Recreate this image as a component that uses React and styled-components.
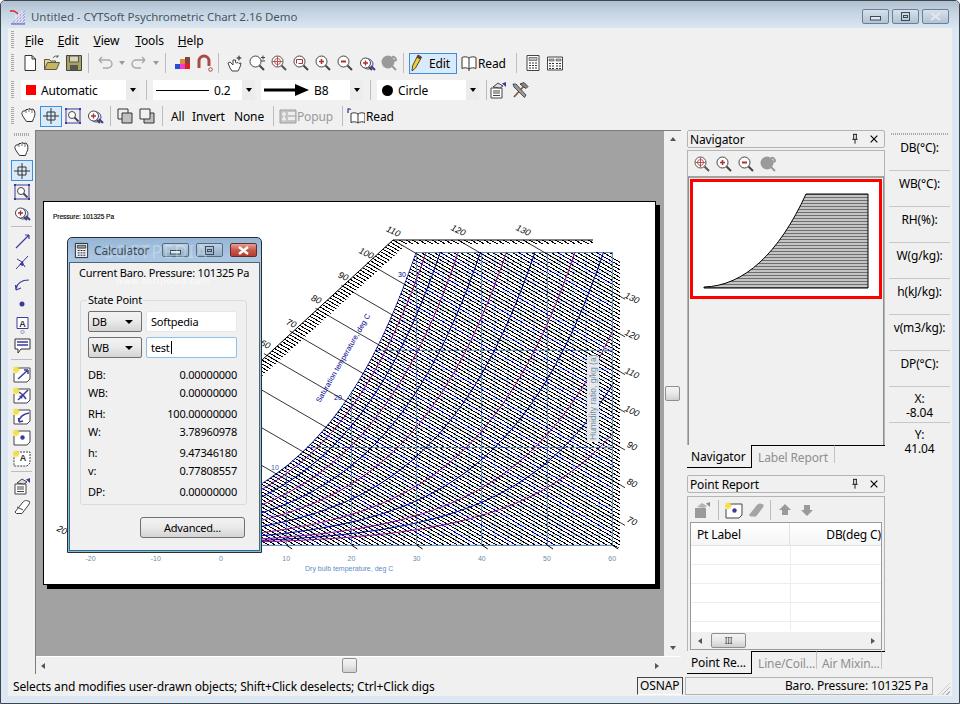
import React from 'react';
import styled, { createGlobalStyle } from 'styled-components';

const Global = createGlobalStyle`
  html, body { margin: 0; padding: 0; background: #fff; }
  body { font-family: "Noto Sans", "Liberation Sans", sans-serif; font-size: 12px; letter-spacing: -0.14px; color: #000; }
  * { box-sizing: border-box; }
`;

const Win = styled.div`
  width: 960px;
  height: 704px;
  display: flex;
  flex-direction: column;
  border: 1px solid #3f444b;
  border-radius: 5px 5px 0 0;
  background: #dbe7f3;
  overflow: hidden;
`;

const TitleBar = styled.div`
  height: 27px;
  display: flex;
  align-items: center;
  padding: 4px 10px 0 9px;
  background: linear-gradient(#aebfd0, #c4d3e1 40%, #dae7f3);
`;

const TitleText = styled.div`
  flex: 1;
  margin-left: 5px;
  color: #4a5560;
  font-size: 11.5px;
  letter-spacing: -0.05px;
`;

const CapBtn = styled.div`
  width: 27px;
  height: 15px;
  margin-left: 3px;
  display: flex;
  align-items: center;
  justify-content: center;
  border: 1px solid #6d7f92;
  border-radius: 2px;
  background: linear-gradient(#d6e1ec, #c4d2df 50%, #b3c3d3);
`;

const Client = styled.div`
  flex: 1;
  margin: 0 7px 7px;
  display: flex;
  flex-direction: column;
  background: #f0f0f0;
  min-height: 0;
`;

const Toolbars = styled.div`
  height: 102px;
  display: flex;
  flex-direction: column;
`;

const Bar = styled.div`
  height: ${p => p.$h || 22}px;
  margin-top: ${p => p.$mt || 0}px;
  display: flex;
  align-items: center;
  padding-left: 3px;
`;

const Grip = styled.div`
  width: 3px;
  height: ${p => p.$h || 18}px;
  margin-right: ${p => p.$mr ?? 5}px;
  background: repeating-linear-gradient(#a8a8a8 0 1px, transparent 1px 2px);
`;

const MenuItem = styled.div`
  margin-right: ${p => p.$mr}px;
  font-size: 12px;
  u { text-decoration: underline; }
`;

const Btn = styled.div`
  width: 22px;
  height: 21px;
  flex: none;
  display: flex;
  align-items: center;
  justify-content: center;
  border: 1px solid ${p => (p.$on ? '#3c8fe0' : 'transparent')};
  background: ${p => (p.$on ? '#d9ebfb' : 'transparent')};
`;

const DropBtn = styled.div`
  width: 12px;
  display: flex;
  justify-content: center;
  &::after {
    content: '';
    border: 3px solid transparent;
    border-top: 4px solid #9a9a9a;
    border-bottom: 0;
  }
`;

const Sep = styled.div`
  width: 1px;
  height: ${p => p.$h || 20}px;
  flex: none;
  margin: 0 ${p => p.$r ?? 5}px 0 ${p => p.$l ?? 3}px;
  background: #bdbdbd;
`;

const TextBtn = styled.div`
  width: ${p => p.$w}px;
  height: 21px;
  flex: none;
  display: flex;
  align-items: center;
  gap: ${p => p.$gap ?? 0}px;
  padding-left: ${p => p.$pl ?? 0}px;
  border: 1px solid ${p => (p.$on ? '#3c8fe0' : 'transparent')};
  background: ${p => (p.$on ? '#d9ebfb' : 'transparent')};
  color: ${p => (p.$off ? '#9a9a9a' : '#000')};
`;

const Combo = styled.div`
  width: ${p => p.$w}px;
  height: 20px;
  flex: none;
  margin-left: ${p => p.$ml ?? 0}px;
  display: flex;
  align-items: center;
  padding-left: ${p => p.$pl ?? 5}px;
  gap: 5px;
  background: #fff;
`;

const ComboArrow = styled.div`
  width: 13px;
  align-self: stretch;
  margin-left: auto;
  display: flex;
  align-items: center;
  justify-content: center;
  background: #ececec;
  &::after {
    content: '';
    border: 3px solid transparent;
    border-top: 4px solid #000;
    border-bottom: 0;
  }
`;

const Swatch = styled.div`
  width: 10px;
  height: 10px;
  background: #f00;
`;

const Dot = styled.div`
  width: 11px;
  height: 11px;
  border-radius: 50%;
  background: #000;
`;

const LineSample = styled.div`
  width: 53px;
  height: 1px;
  background: #000;
`;

const Main = styled.div`
  flex: 1;
  display: flex;
  min-height: 0;
`;

const Rail = styled.div`
  width: 27px;
  flex: none;
  display: flex;
  flex-direction: column;
  align-items: center;
  padding-top: 3px;
`;

const RailGrip = styled.div`
  width: 15px;
  height: 3px;
  margin-bottom: 3px;
  background: repeating-linear-gradient(90deg, #a8a8a8 0 1px, transparent 1px 2px);
`;

const RailSep = styled.div`
  width: 21px;
  height: 1px;
  margin: 3px 0;
  background: #bdbdbd;
`;

const Pane = styled.div`
  width: 646px;
  height: 544px;
  flex: none;
  display: flex;
  flex-direction: column;
  border-left: 1px solid #7c7c7c;
  border-top: 1px solid #7c7c7c;
`;

const PaneTop = styled.div`
  flex: 1;
  display: flex;
  min-height: 0;
`;

const Canvas = styled.div`
  position: relative;
  flex: 1;
  padding: 70px 0 0 7px;
  background: #a2a2a2;
  overflow: hidden;
`;

const Paper = styled.div`
  width: 613px;
  height: 384px;
  border: 1px solid #000;
  background: #fff;
  box-shadow: 4px 4px 0 #000;
  svg { display: block; }
`;

const VScroll = styled.div`
  width: 17px;
  flex: none;
  display: flex;
  flex-direction: column;
  align-items: center;
  padding: 6px 0;
  background: #f0f0f0;
`;

const HScroll = styled.div`
  height: 18px;
  flex: none;
  display: flex;
  align-items: center;
  padding: 0 ${p => p.$pr ?? 22}px 0 ${p => p.$pl ?? 5}px;
  border-top: 1px solid #fff;
  background: #f0f0f0;
`;

const Arrow = styled.div`
  flex: none;
  border: 3.5px solid transparent;
  ${p => p.$dir === 'up' && 'border-bottom: 4px solid #555; border-top: 0;'}
  ${p => p.$dir === 'down' && 'border-top: 4px solid #555; border-bottom: 0;'}
  ${p => p.$dir === 'left' && 'border-right: 4px solid #555; border-left: 0;'}
  ${p => p.$dir === 'right' && 'border-left: 4px solid #555; border-right: 0;'}
`;

const EndArrow = styled(Arrow)`
  margin-left: ${p => (p.$dir === 'right' ? 'auto' : '0')};
  margin-top: ${p => (p.$dir === 'down' ? 'auto' : '0')};
`;

const Thumb = styled.div`
  flex: none;
  width: ${p => p.$w || 15}px;
  height: 15px;
  margin: ${p => p.$mt || 0}px 0 0 ${p => p.$ml || 0}px;
  display: flex;
  align-items: center;
  justify-content: center;
  border: 1px solid #8e8f8f;
  border-radius: 2px;
  background: linear-gradient(#f4f4f4, #e8e8e8 50%, #d0d0d0);
  font-size: 8px;
  color: #444;
`;

const Dock = styled.div`
  width: 198px;
  flex: none;
  margin-left: 6px;
  display: flex;
  flex-direction: column;
`;

const DockHead = styled.div`
  height: 18px;
  flex: none;
  margin-top: ${p => p.$mt || 0}px;
  display: flex;
  align-items: center;
  padding: 0 4px 0 2px;
  border: 1px solid #b4b4b4;
  border-radius: 2px;
  font-size: 12px;
  gap: 7px;
  span { flex: 1; }
`;

const DockBody = styled.div`
  height: ${p => p.$h}px;
  flex: none;
  margin-top: ${p => p.$mt ?? 2}px;
  display: flex;
  flex-direction: column;
  border: 1px solid #b4b4b4;
  border-bottom: 0;
`;

const DockTools = styled.div`
  height: 25px;
  flex: none;
  display: flex;
  align-items: center;
  padding-left: 3px;
`;

const NavView = styled.div`
  flex: 1;
  border-top: 2px solid #a2a2a2;
  border-left: 1px solid #8f8f8f;
  border-right: 1px solid #8f8f8f;
  padding: 1px 1px 0;
  background: #f0f0f0;
`;

const NavFrame = styled.div`
  height: 120px;
  border: 3px solid #f00;
  background: #fff;
  svg { display: block; }
`;

const Tabs = styled.div`
  height: ${p => p.$h}px;
  flex: none;
  display: flex;
  align-items: flex-start;
`;

const Tab = styled.div`
  flex: none;
  width: ${p => p.$w}px;
  padding: 3px 0 0 ${p => p.$pl ?? 4}px;
  color: ${p => (p.$on ? '#000' : '#8f8f8f')};
  white-space: nowrap;
  border-right: 1px solid ${p => (p.$on ? '#000' : '#c4c4c4')};
  border-bottom: ${p => (p.$on ? '1px solid #000' : '0')};
  border-top: ${p => (p.$on ? '0' : '1px solid #000')};
  height: ${p => (p.$on ? '100%' : '18px')};
`;

const TabRest = styled.div`
  flex: 1;
  border-top: 1px solid #000;
`;

const Table = styled.div`
  height: 128px;
  margin: 0 2px;
  flex: none;
  display: flex;
  flex-direction: column;
  border: 1px solid #9a9a9a;
  background: #fff;
`;

const THead = styled.div`
  height: 23px;
  flex: none;
  display: grid;
  grid-template-columns: 99px 1fr;
  background: linear-gradient(#fff, #f4f5f6);
  border-bottom: 1px solid #e2e2e2;
`;

const Th = styled.div`
  padding: 3px 0 0 6px;
  text-align: ${p => (p.$right ? 'right' : 'left')};
  border-right: ${p => (p.$right ? '0' : '1px solid #e2e2e2')};
  overflow: hidden;
  white-space: nowrap;
`;

const TRow = styled.div`
  height: 19px;
  flex: none;
  display: grid;
  grid-template-columns: 100px 1fr;
  border-bottom: 1px solid #ededed;
  div:first-child { border-right: 1px solid #ededed; }
`;

const TableGap = styled.div`
  flex: 1;
  min-height: 0;
  overflow: hidden;
`;

const Info = styled.div`
  width: 61px;
  flex: none;
  margin-left: 4px;
  display: flex;
  flex-direction: column;
  align-items: stretch;
  padding-top: 3px;
`;

const InfoGrip = styled.div`
  height: 2px;
  margin: 0 2px;
  background: repeating-linear-gradient(90deg, #a8a8a8 0 1px, transparent 1px 2px);
`;

const InfoCell = styled.div`
  height: 36px;
  flex: none;
  padding-top: ${p => p.$pt ?? 6}px;
  border-bottom: 1px solid #c8c8c8;
  text-align: center;
  line-height: 14px;
  white-space: nowrap;
  &:last-child { border-bottom: 0; }
`;

const Status = styled.div`
  height: 20px;
  flex: none;
  display: flex;
  align-items: center;
  padding-left: 5px;
`;

const StatusText = styled.div`
  flex: 1;
  white-space: nowrap;
`;

const StatusBox = styled.div`
  height: 18px;
  width: ${p => p.$w}px;
  flex: none;
  margin-right: ${p => p.$mr}px;
  padding: 0 4px 0 2px;
  text-align: ${p => (p.$right ? 'right' : 'left')};
  line-height: 16px;
  border: 1px solid ${p => (p.$dark ? '#444' : '#b4b4b4')};
  border-bottom-color: ${p => (p.$dark ? '#fff' : '#b4b4b4')};
  white-space: nowrap;
`;

const SizeGrip = styled.div`
  width: 12px;
  height: 12px;
  margin: 6px 2px 0 2px;
  background: repeating-linear-gradient(135deg, transparent 0 2px, #b4b4b4 2px 3px);
  clip-path: polygon(100% 0, 100% 100%, 0 100%);
`;

const Dialog = styled.div`
  position: absolute;
  left: 31px;
  top: 106px;
  width: 195px;
  height: 316px;
  display: flex;
  flex-direction: column;
  border: 1px solid #2a2f36;
  border-radius: 5px 5px 0 0;
  background: linear-gradient(#95b6d6, #a9c6e2 18px, #6fc4ec);
  font-size: 11px;
  letter-spacing: -0.2px;
`;

const DialogTitle = styled.div`
  position: relative;
  height: 24px;
  flex: none;
  display: flex;
  align-items: center;
  padding: 0 4px 0 5px;
  gap: 4px;
  color: #3f4650;
`;

const DialogName = styled.div`
  flex: 1;
  font-size: 12px;
`;

const DlgCap = styled.div`
  width: 27px;
  height: 14px;
  margin-left: ${p => p.$ml ?? 3}px;
  display: flex;
  align-items: center;
  justify-content: center;
  border: 1px solid ${p => (p.$close ? '#6a2a24' : '#5b6b7c')};
  border-radius: 2px;
  background: ${p => (p.$close
    ? 'linear-gradient(#e2a196, #c9584a 50%, #b83c2e)'
    : 'linear-gradient(#bfd2e6, #a6bed6 50%, #96b0ca)')};
`;

const Watermark = styled.div`
  position: absolute;
  left: 36px;
  top: 1px;
  color: rgba(255, 255, 255, 0.28);
  font-size: 18px;
  letter-spacing: 1px;
  pointer-events: none;
`;

const DialogBody = styled.div`
  position: relative;
  flex: 1;
  margin: 0 1px 1px;
  padding: 2px 10px 0 9px;
  border: 1px solid #51626f;
  background: #f0f0f0;
`;

const WatermarkSmall = styled.div`
  position: absolute;
  left: 46px;
  top: 11px;
  color: rgba(255, 255, 255, 0.75);
  font-size: 9px;
  letter-spacing: 0.6px;
  pointer-events: none;
`;

const BaroLine = styled.div`
  white-space: nowrap;
  line-height: 16px;
`;

const Group = styled.fieldset`
  height: 212px;
  margin: 12px 4px 0 1px;
  padding: 0 9px 0 7px;
  border: 1px solid #d3dce4;
  border-radius: 3px;
  legend {
    padding: 0 1px;
    margin-left: -1px;
    font-size: 11px;
    line-height: 14px;
  }
`;

const FieldRow = styled.div`
  display: flex;
  gap: 4px;
  margin-top: ${p => p.$mt}px;
`;

const Select = styled.div`
  width: 54px;
  height: 21px;
  flex: none;
  display: flex;
  align-items: center;
  justify-content: space-between;
  padding: 0 8px 0 3px;
  border: 1px solid #707070;
  border-radius: 2px;
  background: linear-gradient(#f2f2f2, #ebebeb 45%, #d4d4d4);
  &::after {
    content: '';
    border: 4px solid transparent;
    border-top: 4px solid #000;
    border-bottom: 0;
  }
`;

const Field = styled.div`
  width: 91px;
  height: 21px;
  display: flex;
  align-items: center;
  padding-left: 4px;
  background: #fff;
  border: 1px solid ${p => (p.$focus ? '#8fc0e8' : '#e4e9ef')};
  border-radius: 2px;
`;

const Caret = styled.span`
  width: 1px;
  height: 13px;
  margin-left: 1px;
  background: #000;
`;

const Readouts = styled.div`
  margin-top: 8px;
`;

const Readout = styled.div`
  height: 18px;
  margin-top: ${p => p.$mt || 0}px;
  display: flex;
  justify-content: space-between;
  line-height: 18px;
`;

const Advanced = styled.div`
  width: 105px;
  height: 21px;
  margin: 12px 0 0 61px;
  text-align: center;
  line-height: 19px;
  border: 1px solid #707070;
  border-radius: 3px;
  background: linear-gradient(#f2f2f2, #ebebeb 45%, #d4d4d4);
`;

const Ico = styled.svg`
  flex: none;
  width: ${p => p.$s || 18}px;
  height: ${p => p.$s || 18}px;
`;

const ChartLabel = styled.text`
  font-family: "Liberation Sans", sans-serif;
  font-size: ${p => p.$fs || 7}px;
  letter-spacing: 0;
  fill: ${p => p.$c || '#6c8cab'};
`;

const ChartItalic = styled(ChartLabel)`
  font-style: italic;
  fill: #000;
  font-size: 9px;
`;

const ic = { fill: 'none', stroke: '#333', strokeWidth: 1 };
const idg = '#3b3b9b';

const Lens = ({ children, c = '#444' }) => (
  <g>
    <circle cx="7.5" cy="7.5" r="5.5" fill="#fff" stroke={c} strokeWidth="1" />
    <path d="M11.5 11.5 L16 16" stroke={c} strokeWidth="2" />
    {children}
  </g>
);

const redPlus = <path d="M5 7.5h5M7.5 5v5" stroke="#a33" strokeWidth="1.6" />;
const redMinus = <path d="M5 7.5h5" stroke="#a33" strokeWidth="1.8" />;

const corners = (
  <path d="M1 1h2v2h-2zM15 1h2v2h-2zM1 15h2v2h-2zM15 15h2v2h-2z" fill={idg} />
);

const spark = <path d="M3 0.5l1 2.2 2.2-1-1 2.2 2.2 1-2.2 1 1 2.2-2.2-1-1 2.2-1-2.2-2.2 1 1-2.2-2.2-1 2.2-1-1-2.2 2.2 1z" fill="#f4e04a" />;

const dogEar = (
  <path d="M4 3h13v11l-3 3H1v-9" fill="#fff" stroke="#444" />
);

const glyphs = {
  new: <path d="M4 1.5h7l3.5 3.5v11.5H4zM11 1.5v3.5h3.5" fill="#fff" stroke="#333" />,
  open: (
    <g>
      <path d="M1.5 15.5v-10h5l1 1.5h5v2" fill="#e8d98a" stroke="#555" />
      <path d="M1.5 15.5l3-7h12l-3 7z" fill="#c9b55a" stroke="#555" />
      <path d="M10 4c1-2 3-2.500 5-1.500M15 1v2h-2" {...ic} stroke="#4a7a3a" />
    </g>
  ),
  save: (
    <g>
      <path d="M1.500 1.500h15v15h-15z" fill="#a8a25a" stroke="#444" />
      <path d="M4.500 2h9v6h-9z" fill="#d8d6b4" stroke="#555" />
      <path d="M5 11h8v5.500H5z" fill="#555" />
    </g>
  ),
  undo: <path d="M3 6h9a3.500 3.500 0 0 1 0 8H7M3 6l3-3M3 6l3 3" fill="none" stroke="#a8a8a8" strokeWidth="1.400" />,
  redo: <path d="M15 6H6a3.500 3.500 0 0 0 0 8h5M15 6l-3-3M15 6l-3 3" fill="none" stroke="#a8a8a8" strokeWidth="1.400" />,
  palette: (
    <g>
      <path d="M2 10h5v5H2z" fill="#2b4bd8" />
      <path d="M7 10h5v5H7z" fill="#ee3ad0" />
      <path d="M12 10h5v5h-5z" fill="#e02020" />
      <path d="M7 5h5v5H7z" fill="#d98a3a" />
      <path d="M12 3h5v7h-5z" fill="#8a4040" />
    </g>
  ),
  magnet: (
    <g>
      <path d="M4 14V7a5 5 0 0 1 10 0v5" fill="none" stroke="#a84a4a" strokeWidth="3" />
      <circle cx="15.500" cy="15.500" r="1.800" {...ic} stroke="#a84a4a" />
    </g>
  ),
  pick: (
    <g>
      <path d="M2 9l2 5 2 3h6l2-4 1-4-2 .5-1-1-1.500.5-1-.5V6L7 6v5L4 8z" fill="#fff" stroke="#444" />
      <path d="M13 1l1 2 2 1-2 1-1 2-1-2-2-1 2-1z" fill="#556" />
    </g>
  ),
  zoompm: (
    <Lens>
      <path d="M13 3.500h4M15 1.500v4M13 7h4" stroke="#444" />
    </Lens>
  ),
  ztarget: (
    <Lens c="#555">
      <circle cx="7.500" cy="7.500" r="3" fill="none" stroke="#a33" strokeWidth=".8" />
      <path d="M2.500 7.500h10M7.500 2.500v10" stroke="#a33" strokeWidth=".8" />
    </Lens>
  ),
  zrect: (
    <Lens>
      <path d="M4.500 9.500v-4h6" fill="none" stroke="#a33" />
      <path d="M10.500 5.500v4h-4" fill="none" stroke="#a33" />
    </Lens>
  ),
  zplus: <Lens>{redPlus}</Lens>,
  zminus: <Lens>{redMinus}</Lens>,
  zglass: (
    <g>
      <path d="M10 5a5 5 0 1 1-.1 0" fill="none" stroke={idg} />
      <path d="M13 12l4 4" stroke={idg} strokeWidth="2" />
      <circle cx="7.500" cy="9" r="5" fill="#fff" stroke="#444" />
      <path d="M11 13l3 3" stroke="#444" strokeWidth="2" />
      <path d="M5 9h5M7.500 6.500v5" stroke="#a33" strokeWidth="1.400" />
    </g>
  ),
  zgrey: (
    <g>
      <circle cx="8" cy="8" r="6.500" fill="#9a9a9a" />
      <path d="M12 3a3 3 0 0 1 4 3l-2 1M12 12l4 4" fill="none" stroke="#9a9a9a" strokeWidth="2" />
    </g>
  ),
  pencil: (
    <g>
      <path d="M6 3l3.500 2-5 9-3.500 3 .5-5z" fill="#f4d22a" stroke="#444" />
      <path d="M6 3l1-2 3.500 2-1 2z" fill="#8a3030" stroke="#444" />
    </g>
  ),
  book: <path d="M9 4c-2-1.500-5-1.500-7-.5v11c2-1 5-1 7 .5 2-1.500 5-1.500 7-.5v-11c-2-1-5-1-7 .5zM9 4v11M9 15v2" fill="#fff" stroke="#333" />,
  bookup: (
    <g>
      <path d="M9 7c-2-1.500-5-1.500-7-.5v9c2-1 5-1 7 .5 2-1.500 5-1.500 7-.5v-9c-2-1-5-1-7 .5zM9 7v9" fill="#fff" stroke="#333" transform="translate(2 0)" />
      <path d="M1 6V1.500M1 1.500l3 1M1 1.500l-0 3" stroke={idg} strokeWidth="1.300" fill="none" />
    </g>
  ),
  calc: (
    <g>
      <path d="M3 1.500h12v15H3z" fill="#fff" stroke="#444" />
      <path d="M5 3.500h8v3H5z" fill="#bbb" stroke="#444" strokeWidth=".6" />
      <path d="M5 9h2M8 9h2M11 9h2M5 11.500h2M8 11.500h2M11 11.500h2M5 14h2M8 14h2M11 14h2" stroke="#333" />
    </g>
  ),
  calcw: (
    <g>
      <path d="M1.500 3h15v13h-15z" fill="#fff" stroke="#444" />
      <path d="M3 5h5v2H3zM10 5h5v2h-5z" fill="#bbb" stroke="#444" strokeWidth=".6" />
      <path d="M3 9.500h2M6 9.500h2M10 9.500h2M13 9.500h2M3 12h2M6 12h2M10 12h2M13 12h2M3 14.500h2M6 14.500h2M10 14.500h2M13 14.500h2" stroke="#333" />
    </g>
  ),
  report: (
    <g>
      <path d="M2 7h11v10H2z" fill="#fff" stroke="#444" />
      <path d="M4 10h7M4 12h7M4 14.500h7" stroke="#444" />
      <path d="M4 6l5-4 5 3-3 2z" fill="#ddd" stroke="#444" />
      <path d="M13 2.500l4-1.500v5z" fill={idg} />
    </g>
  ),
  tools: (
    <g>
      <path d="M3 16L13 5" stroke="#8a5a30" strokeWidth="1.800" />
      <path d="M9 3l4-1.500 4 4-2 2-3-2z" fill="#888" stroke="#444" />
      <path d="M2 3l3 0 10 11-1.500 2.500L3 6z" fill="#999" stroke="#333" strokeWidth=".8" />
    </g>
  ),
  hand: (
    <g>
      <path d="M4 11C2 8 1 6 3 4l2 0 1-1.500h2l1-1 2 1 2-.5 1.500 2c1 3 0 6-1 7.500l-1 3H6.500z" fill="#fff" stroke="#333" />
      <path d="M6 3v3M9 2v3M12 3v3" stroke="#333" strokeWidth=".7" />
    </g>
  ),
  cross: (
    <g>
      <path d="M1 9h16M9 1v16" stroke="#333" />
      <path d="M5 5h8v8H5z" fill="none" stroke="#333" />
    </g>
  ),
  zsel: (
    <g>
      <path d="M2 2h14v14H2z" fill="none" stroke={idg} />
      {corners}
      <circle cx="8" cy="8" r="3.500" fill="#fff" stroke="#444" />
      <path d="M10.500 10.500l4 4" stroke="#444" strokeWidth="1.800" />
    </g>
  ),
  copya: (
    <g>
      <path d="M2 2h10v10H2z" fill="#f0f0f0" stroke="#333" />
      <path d="M6 6h10v10H6z" fill="#c0c0c0" stroke="#333" />
    </g>
  ),
  copyb: (
    <g>
      <path d="M6 6h10v10H6z" fill="#c0c0c0" stroke="#333" />
      <path d="M2 2h10v10H2z" fill="#f0f0f0" stroke="#333" />
    </g>
  ),
  popup: (
    <g>
      <path d="M1 3h16v13H1z" fill="#c4c4c4" stroke="#a0a0a0" />
      <path d="M9 5h7v3H9zM9 10h7v3H9z" fill="#eee" />
      <path d="M5 5v9M3 7h4M3 12h4" stroke="#eee" strokeWidth="1.500" />
    </g>
  ),
  arrowline: <path d="M3 16L16 3M16 3h-4M16 3v4" fill="none" stroke={idg} strokeWidth="1.200" />,
  hinge: <path d="M3 16l12-13M9 9l-5-3M9 9l3 5M9.500 8.500l-2.500 3 3 1z" fill={idg} stroke={idg} strokeWidth="1" />,
  curve: <path d="M3 15c1-6 6-9 13-9M3 16l-.5-5M3 16l5-2" fill="none" stroke={idg} strokeWidth="1.200" />,
  point: <circle cx="9" cy="9" r="2.500" fill={idg} />,
  textbox: (
    <g>
      <path d="M4 1.500h11v11H4z" fill="#fff" stroke={idg} />
      <text x="9.500" y="10.500" textAnchor="middle" fontSize="9" fontFamily="Liberation Sans" fontWeight="bold" fill="#333">A</text>
      <path d="M9.500 14l2 2-2 2-2-2z" fill="none" stroke="#777" strokeWidth=".8" />
    </g>
  ),
  note: (
    <g>
      <path d="M2 2h15v10H8l-3 4v-4H2z" fill="#fff" stroke="#333" />
      <path d="M4 5h11M4 8h11" stroke={idg} strokeWidth="1.500" />
    </g>
  ),
  narrow: (
    <g>
      {dogEar}
      <path d="M5 14L15 5M15 5h-4M15 5v4" fill="none" stroke={idg} strokeWidth="1.500" />
      {spark}
    </g>
  ),
  nhinge: (
    <g>
      {dogEar}
      <path d="M5 14l10-10M10 9l-4-3M10 9l3 4" fill="none" stroke={idg} strokeWidth="1.500" />
      <path d="M10 9l-4 1 3 3z" fill={idg} />
      {spark}
    </g>
  ),
  ncurve: (
    <g>
      {dogEar}
      <path d="M6 14c1-5 5-7 10-8M6 15l-.5-4M6 15l4-1" fill="none" stroke={idg} strokeWidth="1.500" />
      {spark}
    </g>
  ),
  npoint: (
    <g>
      {dogEar}
      <circle cx="9.500" cy="9.500" r="2.200" fill={idg} />
      {spark}
    </g>
  ),
  ntext: (
    <g>
      <path d="M4 3h13v11l-3 3H1v-9" fill="#fff" stroke="#444" strokeDasharray="2 1" />
      <text x="10" y="12" textAnchor="middle" fontSize="9" fontFamily="Liberation Sans" fontWeight="bold" fill="#333">A</text>
      {spark}
    </g>
  ),
  eraser: <path d="M2 14L10 4c1-1 2-1.500 3.500-1.500l3 1c.5 1 0 2-1 3.500L9 15.500H3.500zM4 9l6 3" fill="#fff" stroke="#444" />,
  greyreport: (
    <g>
      <path d="M2 7h11v10H2z" fill="#9a9a9a" />
      <path d="M4 6l5-4 5 3-3 2z" fill="#b4b4b4" />
      <path d="M13 2.500l4-1.500v5z" fill="#8a8a8a" />
    </g>
  ),
  greyeraser: <path d="M2 14L10 4c1-1 2-1.500 3.500-1.500l3 1c.5 1 0 2-1 3.500L9 15.500H3.500z" fill="#a4a4a4" />,
  up: <path d="M9 3l6 6h-3v5H6V9H3z" fill="#9a9a9a" />,
  down: <path d="M9 15l6-6h-3V4H6v5H3z" fill="#9a9a9a" />,
  calcTitle: (
    <g>
      <path d="M2.500 1.500h13v15h-13z" fill="#e8eef4" stroke="#222" />
      <path d="M4.500 3.500h9v3h-9z" fill="#999" stroke="#222" strokeWidth=".7" />
      <path d="M5 9h2M8 9h2M11 9h2M5 11.500h2M8 11.500h2M11 11.500h2M5 14h2M8 14h2M11 14h2" stroke="#222" />
    </g>
  ),
  pin: <path d="M6 2h6M7 2v7M11 2v7M5 9.500h8M9 9.500V16" fill="none" stroke="#000" strokeWidth="1.300" />,
  close: <path d="M4 4l10 10M14 4L4 14" fill="none" stroke="#000" strokeWidth="1.700" />,
};

const Icon = ({ name, s }) => (
  <Ico $s={s} viewBox="0 0 18 18">
    {glyphs[name]}
  </Ico>
);

const AppLogo = () => (
  <Ico $s={16} viewBox="0 0 16 16">
    <path d="M1 15L15 1v14z" fill="#a8a8e0" />
    <path d="M3 15L15 3M6 15L15 6M9 15l6-6M12 15l3-3M6 6v9M9 4v11M12 2v13" stroke="#fff" strokeWidth=".7" />
    <path d="M0 2h4l3 2 1 1" fill="none" stroke="#e02020" strokeWidth="1.300" />
    <path d="M1 15h14" stroke="#55a" />
  </Ico>
);

const CapGlyph = ({ kind, c = '#3d4a58' }) => (
  <svg width="13" height="9" viewBox="0 0 13 9">
    {kind === 'min' && <rect x="1.500" y="4.500" width="10" height="3.500" fill="#dfe8f0" stroke={c} />}
    {kind === 'max' && (
      <g fill="none" stroke={c}>
        <rect x="2.500" y="0.500" width="8" height="8" />
        <rect x="4.500" y="3.500" width="4" height="2" />
      </g>
    )}
    {kind === 'x' && (
      <path d="M2 1l9 7M11 1L2 8" fill="none" stroke={c} strokeWidth="2.200" />
    )}
    {kind === 'xw' && (
      <path d="M2 1l9 7M11 1L2 8" fill="none" stroke="#fff" strokeWidth="2.400" />
    )}
  </svg>
);

// chart geometry, in page coordinates
const axisX = t => 221 + 6.52 * t;
const axisY = w => 545 - 9.75 * w;
const satH = x => 62 * Math.exp(0.0101 * (x - 262));

const curveD = k => {
  let d = '';
  for (let x = 180; x <= 612; x += 6) {
    d += `${d ? 'L' : 'M'}${x} ${(545 - k * satH(x)).toFixed(1)}`;
  }
  return d;
};

const enthY = (x, n) => 240 + 0.58 * (x - (393 + 6.5 * (n - 110)));

const satPoints = (() => {
  const pts = ['180,545'];
  for (let x = 180; x <= 416; x += 6) pts.push(`${x},${(545 - satH(x)).toFixed(1)}`);
  pts.push('416,252', '612,252', '612,545');
  return pts.join(' ');
})();

const hatch = { black: '', navy: '', main: '' };
for (let n = -30; n <= 140; n += 1) {
  const d = `M44 ${enthY(44, n).toFixed(1)}L625 ${enthY(625, n).toFixed(1)}`;
  hatch.black += d;
  if (n % 6 === 0) hatch.navy += d;
}
for (let n = 20; n <= 130; n += 10) {
  const x0 = 393 + 6.5 * (n - 110);
  const sx = n >= 110 ? x0 : (0.88 * 393 + 0.58 * x0) / 1.46;
  const end = Math.min(625, x0 + (545 - 240) / 0.58);
  hatch.main += `M${sx.toFixed(1)} ${enthY(sx, n).toFixed(1)}L${end.toFixed(1)} ${enthY(end, n).toFixed(1)}`;
}

const lightGrid = (() => {
  let d = '';
  for (let t = -6; t <= 60; t += 2) d += `M${axisX(t).toFixed(1)} 252V545`;
  for (let w = 0; w <= 30; w += 1) d += `M180 ${axisY(w).toFixed(1)}H612`;
  return d;
})();

const steelGrid = (() => {
  let d = 'M180 350H612M180 447H612';
  for (let t = 0; t <= 50; t += 10) d += `M${axisX(t).toFixed(1)} 252V545`;
  return d;
})();

const rhCurves = [0.9, 0.65, 0.4, 0.2, 0.1, 0.052];
const blueCurves = [0.78, 0.52, 0.3, 0.15, 0.075];

const rightLabels = [
  ['130', 298], ['120', 335], ['110', 373], ['100', 411], ['90', 446], ['80', 483], ['70', 521],
];
const slantLabels = [
  ['110', 392, 234], ['120', 457, 233], ['130', 522, 233],
  ['100', 365, 256], ['90', 342, 279], ['80', 315, 302], ['70', 290, 326], ['60', 264, 347],
];
const tickLabels = [-20, -10, 0, 10, 20, 30, 40, 50, 60];

const Chart = () => (
  <svg width="611" height="382" viewBox="44 202 611 382">
    <defs>
      <clipPath id="plotClip">
        <polygon points={satPoints} />
      </clipPath>
      <clipPath id="hatchClip">
        <polygon points={satPoints} />
        <polygon points="393,240 593,240 593,244 393,244" />
        <polygon points="393,240 250,371 260,378 404,247" />
        <polygon points="612,254 620,262 620,548 612,546" />
      </clipPath>
    </defs>

    <ChartLabel x="53" y="219" $fs={6.500} $c="#000" stroke="#000" strokeWidth=".15">Pressure: 101325 Pa</ChartLabel>

    <path d={lightGrid} clipPath="url(#plotClip)" stroke="#c8dffa" strokeWidth="1.600" fill="none" />
    <path d={hatch.black} clipPath="url(#hatchClip)" stroke="#000" strokeWidth="1" fill="none" shapeRendering="crispEdges" />
    <path d={steelGrid} clipPath="url(#plotClip)" stroke="#6d8ead" strokeWidth="1" fill="none" shapeRendering="crispEdges" />
    <path d="M416 252H612V545H180" stroke="#6d8ead" fill="none" shapeRendering="crispEdges" />
    <path d={hatch.navy} clipPath="url(#plotClip)" stroke="#000080" strokeWidth="1" fill="none" shapeRendering="crispEdges" />
    <path d={hatch.main} stroke="#000" strokeWidth=".8" fill="none" />
    <path d="M593 240H393L250 371" stroke="#000" strokeWidth="1" fill="none" />

    {blueCurves.map(k => (
      <path key={k} d={curveD(k)} clipPath="url(#plotClip)" stroke="#00008b" strokeWidth="1" fill="none" />
    ))}
    {rhCurves.map(k => (
      <path key={k} d={curveD(k)} clipPath="url(#plotClip)" stroke="#90108a" strokeWidth="1" fill="none" />
    ))}
    <path d={curveD(1)} clipPath="url(#plotClip)" stroke="#000080" strokeWidth="1.400" fill="none" />

    {[0, 10, 20, 30, 40, 50, 60].map(t => (
      <path key={t} d={`M${axisX(t)} 545l6 4`} stroke="#000" />
    ))}

    {tickLabels.map(t => (
      <ChartLabel key={t} x={axisX(t)} y="561" textAnchor="middle">{t}</ChartLabel>
    ))}
    <ChartLabel x="305" y="571" $c="#5c8cc4">Dry bulb temperature, deg C</ChartLabel>
    <ChartLabel x="607" y="352" textAnchor="middle" $c="#b4c2cf">20</ChartLabel>
    <ChartLabel x="607" y="450" textAnchor="middle" $c="#9fb2c4">10</ChartLabel>
    <ChartLabel x="275" y="470" textAnchor="middle" $c="#3f5f9f">10</ChartLabel>
    <ChartLabel x="338" y="400" textAnchor="middle" $c="#000090">20</ChartLabel>
    <ChartLabel x="402" y="277" textAnchor="middle" $c="#000090">30</ChartLabel>

    <ChartLabel x="320" y="403" $fs={7.500} $c="#000090" transform="rotate(-60 320 403)">Saturation temperature, deg C</ChartLabel>

    <rect x="587" y="356" width="12" height="86" fill="#e8e8e8" />
    <ChartLabel x="596" y="440" $fs={8.500} $c="#6d8ead" transform="rotate(-90 596 440)">Humidity ratio, g/kg (a)</ChartLabel>

    {slantLabels.map(([t, x, y]) => (
      <ChartItalic key={t} x={x} y={y} textAnchor="middle" transform={`rotate(25 ${x} ${y})`}>{t}</ChartItalic>
    ))}
    {rightLabels.map(([t, y]) => (
      <ChartItalic key={t} x="632" y={y + 3} textAnchor="middle" transform={`rotate(25 632 ${y})`}>{t}</ChartItalic>
    ))}
    <ChartItalic x="62" y="533" textAnchor="middle" transform="rotate(25 62 530)">20</ChartItalic>
  </svg>
);

const navHatch = (() => {
  let d = '';
  for (let y = 12; y < 107; y += 3) d += `M0 ${y}H186`;
  return d;
})();

const NavThumb = () => (
  <svg width="186" height="114" viewBox="0 0 186 114">
    <defs>
      <clipPath id="navClip">
        <path d="M11 105C51 104 86 71 113 12H175V106H11z" />
      </clipPath>
    </defs>
    <path d="M11 105C51 104 86 71 113 12H175V106H11z" fill="#c4c4c4" />
    <path d={navHatch} clipPath="url(#navClip)" stroke="#6e6e6e" strokeWidth="1" shapeRendering="crispEdges" />
    <path d="M11 105C51 104 86 71 113 12H175V106H11z" fill="none" stroke="#000" strokeWidth="1" />
  </svg>
);

const App = () => (
  <>
    <Global />
    <Win>
      <TitleBar>
        <AppLogo />
        <TitleText>Untitled - CYTSoft Psychrometric Chart 2.16 Demo</TitleText>
        <CapBtn><CapGlyph kind="min" /></CapBtn>
        <CapBtn><CapGlyph kind="max" /></CapBtn>
        <CapBtn><CapGlyph kind="x" c="#dfe8f0" /></CapBtn>
      </TitleBar>
      <Client>
        <Toolbars>
          <Bar $h={24}>
            <Grip $mr={11} />
            <MenuItem $mr={14}><u>F</u>ile</MenuItem>
            <MenuItem $mr={15}><u>E</u>dit</MenuItem>
            <MenuItem $mr={16}><u>V</u>iew</MenuItem>
            <MenuItem $mr={14}><u>T</u>ools</MenuItem>
            <MenuItem $mr={0}><u>H</u>elp</MenuItem>
          </Bar>
          <Bar>
            <Grip />
            <Btn><Icon name="new" /></Btn>
            <Btn><Icon name="open" /></Btn>
            <Btn><Icon name="save" /></Btn>
            <Sep />
            <Btn><Icon name="undo" /></Btn>
            <DropBtn />
            <Btn><Icon name="redo" /></Btn>
            <DropBtn />
            <Sep />
            <Btn><Icon name="palette" /></Btn>
            <Btn><Icon name="magnet" /></Btn>
            <Sep />
            <Btn><Icon name="pick" /></Btn>
            <Btn><Icon name="zoompm" /></Btn>
            <Btn><Icon name="ztarget" /></Btn>
            <Btn><Icon name="zrect" /></Btn>
            <Btn><Icon name="zplus" /></Btn>
            <Btn><Icon name="zminus" /></Btn>
            <Btn><Icon name="zglass" /></Btn>
            <Btn><Icon name="zgrey" /></Btn>
            <Sep />
            <TextBtn $w={48} $on $pl={1}><Icon name="pencil" />Edit</TextBtn>
            <TextBtn $w={56} $pl={2}><Icon name="book" />Read</TextBtn>
            <Sep />
            <Btn><Icon name="calc" /></Btn>
            <Btn><Icon name="calcw" /></Btn>
          </Bar>
          <Bar $h={24} $mt={4}>
            <Grip $mr={7} />
            <Combo $w={118}>
              <Swatch />Automatic<ComboArrow />
            </Combo>
            <Sep $l={7} $r={6} />
            <Combo $w={102} $pl={3}>
              <LineSample />0.2<ComboArrow />
            </Combo>
            <Combo $w={102} $ml={6} $pl={3}>
              <svg width="45" height="12" viewBox="0 0 45 12">
                <path d="M0 6h35" stroke="#000" strokeWidth="3" />
                <path d="M31 0l14 6-14 6z" fill="#000" />
              </svg>
              B8<ComboArrow />
            </Combo>
            <Sep $l={7} $r={6} />
            <Combo $w={102}>
              <Dot />Circle<ComboArrow />
            </Combo>
            <Sep $l={7} $r={0} />
            <Btn><Icon name="report" /></Btn>
            <Btn><Icon name="tools" /></Btn>
          </Bar>
          <Bar $mt={3}>
            <Grip $mr={4} />
            <Btn><Icon name="hand" /></Btn>
            <Btn $on><Icon name="cross" /></Btn>
            <Btn><Icon name="zsel" /></Btn>
            <Btn><Icon name="zglass" /></Btn>
            <Sep $l={4} $r={3} />
            <Btn><Icon name="copya" /></Btn>
            <Btn><Icon name="copyb" /></Btn>
            <Sep $l={4} $r={4} />
            <TextBtn $w={21} $pl={3}>All</TextBtn>
            <TextBtn $w={42} $pl={3}>Invert</TextBtn>
            <TextBtn $w={38} $pl={3}>None</TextBtn>
            <Sep $l={5} $r={2} />
            <TextBtn $w={66} $pl={2} $off $gap={0}><Icon name="popup" />Popup</TextBtn>
            <Sep $l={0} $r={1} />
            <TextBtn $w={56} $pl={2} $gap={1}><Icon name="bookup" />Read</TextBtn>
          </Bar>
        </Toolbars>
        <Main>
          <Rail>
            <RailGrip />
            <Btn><Icon name="hand" /></Btn>
            <Btn $on><Icon name="cross" /></Btn>
            <Btn><Icon name="zsel" /></Btn>
            <Btn><Icon name="zglass" /></Btn>
            <RailSep />
            <Btn><Icon name="arrowline" /></Btn>
            <Btn><Icon name="hinge" /></Btn>
            <Btn><Icon name="curve" /></Btn>
            <Btn><Icon name="point" /></Btn>
            <Btn><Icon name="textbox" /></Btn>
            <Btn><Icon name="note" /></Btn>
            <RailSep />
            <Btn><Icon name="narrow" /></Btn>
            <Btn><Icon name="nhinge" /></Btn>
            <Btn><Icon name="ncurve" /></Btn>
            <Btn><Icon name="npoint" /></Btn>
            <Btn><Icon name="ntext" /></Btn>
            <RailSep />
            <Btn><Icon name="report" /></Btn>
            <Btn><Icon name="eraser" /></Btn>
          </Rail>
          <Pane>
            <PaneTop>
              <Canvas>
                <Paper><Chart /></Paper>
                <Dialog>
                  <DialogTitle>
                    <Icon name="calcTitle" s={17} />
                    <DialogName>Calculator</DialogName>
                    <DlgCap><CapGlyph kind="min" /></DlgCap>
                    <DlgCap><CapGlyph kind="max" /></DlgCap>
                    <DlgCap $close><CapGlyph kind="xw" /></DlgCap>
                    <Watermark>SOFTPEDIA</Watermark>
                  </DialogTitle>
                  <DialogBody>
                    <WatermarkSmall>www.softpedia.com</WatermarkSmall>
                    <BaroLine>Current Baro. Pressure: 101325 Pa</BaroLine>
                    <Group>
                      <legend>State Point</legend>
                      <FieldRow $mt={4}>
                        <Select>DB</Select>
                        <Field>Softpedia</Field>
                      </FieldRow>
                      <FieldRow $mt={5}>
                        <Select>WB</Select>
                        <Field $focus>test<Caret /></Field>
                      </FieldRow>
                      <Readouts>
                        <Readout><span>DB:</span><span>0.00000000</span></Readout>
                        <Readout><span>WB:</span><span>0.00000000</span></Readout>
                        <Readout $mt={3}><span>RH:</span><span>100.00000000</span></Readout>
                        <Readout><span>W:</span><span>3.78960978</span></Readout>
                        <Readout $mt={3}><span>h:</span><span>9.47346180</span></Readout>
                        <Readout><span>v:</span><span>0.77808557</span></Readout>
                        <Readout $mt={3}><span>DP:</span><span>0.00000000</span></Readout>
                      </Readouts>
                    </Group>
                    <Advanced>Advanced...</Advanced>
                  </DialogBody>
                </Dialog>
              </Canvas>
              <VScroll>
                <Arrow $dir="up" />
                <Thumb $mt={245} />
                <EndArrow $dir="down" />
              </VScroll>
            </PaneTop>
            <HScroll>
              <Arrow $dir="left" />
              <Thumb $ml={297} />
              <EndArrow $dir="right" />
            </HScroll>
          </Pane>
          <Dock>
            <DockHead>
              <span>Navigator</span>
              <Icon name="pin" s={12} />
              <Icon name="close" s={12} />
            </DockHead>
            <DockBody $h={295}>
              <DockTools>
                <Btn><Icon name="ztarget" /></Btn>
                <Btn><Icon name="zplus" /></Btn>
                <Btn><Icon name="zminus" /></Btn>
                <Btn><Icon name="zgrey" /></Btn>
              </DockTools>
              <NavView>
                <NavFrame><NavThumb /></NavFrame>
              </NavView>
            </DockBody>
            <Tabs $h={23}>
              <Tab $on $w={65}>Navigator</Tab>
              <Tab $w={83} $pl={6}>Label Report</Tab>
              <TabRest />
            </Tabs>
            <DockHead $mt={7}>
              <span>Point Report</span>
              <Icon name="pin" s={12} />
              <Icon name="close" s={12} />
            </DockHead>
            <DockBody $h={155} $mt={3}>
              <DockTools>
                <Btn><Icon name="greyreport" /></Btn>
                <Sep $l={5} $r={4} />
                <Btn><Icon name="npoint" /></Btn>
                <Btn><Icon name="greyeraser" /></Btn>
                <Sep $l={3} $r={3} />
                <Btn><Icon name="up" /></Btn>
                <Btn><Icon name="down" /></Btn>
              </DockTools>
              <Table>
                <THead>
                  <Th>Pt Label</Th>
                  <Th $right>DB(deg C)</Th>
                </THead>
                <TableGap>
                  <TRow><div /><div /></TRow>
                  <TRow><div /><div /></TRow>
                  <TRow><div /><div /></TRow>
                  <TRow><div /><div /></TRow>
                  <TRow><div /><div /></TRow>
                </TableGap>
                <HScroll $pl={7} $pr={6}>
                  <Arrow $dir="left" />
                  <Thumb $w={35} $ml={9}>III</Thumb>
                  <EndArrow $dir="right" />
                </HScroll>
              </Table>
            </DockBody>
            <Tabs $h={23}>
              <Tab $on $w={65}>Point Re...</Tab>
              <Tab $w={65} $pl={6}>Line/Coil...</Tab>
              <Tab $w={65} $pl={5}>Air Mixin...</Tab>
              <TabRest />
            </Tabs>
          </Dock>
          <Info>
            <InfoGrip />
            <InfoCell>DB(°C):</InfoCell>
            <InfoCell>WB(°C):</InfoCell>
            <InfoCell>RH(%):</InfoCell>
            <InfoCell>W(g/kg):</InfoCell>
            <InfoCell>h(kJ/kg):</InfoCell>
            <InfoCell>v(m3/kg):</InfoCell>
            <InfoCell>DP(°C):</InfoCell>
            <InfoCell $pt={5}>X:<br />-8.04</InfoCell>
            <InfoCell $pt={5}>Y:<br />41.04</InfoCell>
          </Info>
        </Main>
        <Status>
          <StatusText>Selects and modifies user-drawn objects; Shift+Click deselects; Ctrl+Click digs</StatusText>
          <StatusBox $w={46} $mr={2} $dark>OSNAP</StatusBox>
          <StatusBox $w={248} $mr={3} $right>Baro. Pressure: 101325 Pa</StatusBox>
          <SizeGrip />
        </Status>
      </Client>
    </Win>
  </>
);

export default App;
